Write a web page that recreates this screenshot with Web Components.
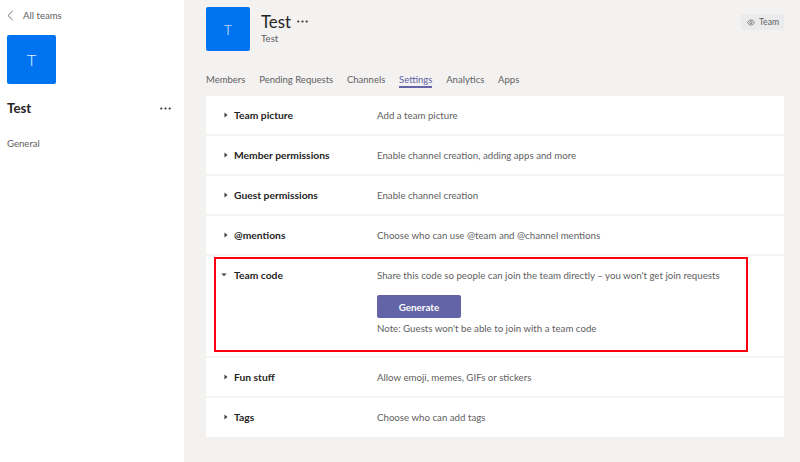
<!DOCTYPE html>
<html><head><meta charset="utf-8"><title>Team settings</title>
<style>
html,body{margin:0;padding:0;height:100%;overflow:hidden}
body{font-family:Lato,"Open Sans","Liberation Sans",sans-serif;color:#252423;background:#f3f2f1}
</style></head><body>
<team-page>
<team-sidebar slot="side" name="Test"></team-sidebar>
<team-main slot="main">
<team-header name="Test" desc="Test"></team-header>
<team-tabs></team-tabs>
<settings-card>
<setting-row label="Team picture" desc="Add a team picture"></setting-row>
<setting-row label="Member permissions" desc="Enable channel creation, adding apps and more"></setting-row>
<setting-row label="Guest permissions" desc="Enable channel creation"></setting-row>
<setting-row label="@mentions" desc="Choose who can use @team and @channel mentions"></setting-row>
<setting-row label="Team code" desc="Share this code so people can join the team directly – you won't get join requests" open>
<team-code></team-code>
</setting-row>
<setting-row label="Fun stuff" desc="Allow emoji, memes, GIFs or stickers"></setting-row>
<setting-row label="Tags" desc="Choose who can add tags" last></setting-row>
</settings-card>
</team-main>
</team-page>
<script>
const def=(n,html)=>customElements.define(n,class extends HTMLElement{
 connectedCallback(){ if(this.shadowRoot) return; this.attachShadow({mode:'open'}).innerHTML=typeof html==='function'?html(this):html; }
});
const dots=(w,c)=>`<svg width="${w}" height="3" viewBox="0 0 11 3" fill="${c}"><circle cx="1.3" cy="1.5" r="1.1"/><circle cx="5.5" cy="1.5" r="1.1"/><circle cx="9.7" cy="1.5" r="1.1"/></svg>`;
def('team-page',`<style>:host{display:flex;width:800px;height:462px}
::slotted([slot=side]){flex:0 0 184px}::slotted([slot=main]){flex:1}</style>
<slot name="side"></slot><slot name="main"></slot>`);
def('team-sidebar',e=>`<style>
:host{display:block;background:#fff;padding:9px 0 0 7px;box-sizing:border-box;height:462px}
.back{display:flex;align-items:center;font-size:9.6px;line-height:14px;color:#616161;height:14px}
.back svg{margin-right:9px;margin-top:-1px}
.av{width:49px;height:49px;background:#0074f0;border-radius:2px;color:#e3f0ff;font-size:16.5px;font-weight:300;display:flex;align-items:center;justify-content:center;margin-top:12px}
.name{display:flex;justify-content:space-between;align-items:center;margin-top:15px;padding-right:13px;height:18px;font-weight:700;font-size:13.3px;color:#252423}
.gen{font-size:9.6px;line-height:14px;color:#616161;margin-top:20px}
</style>
<div class="back"><svg width="7" height="11" viewBox="0 0 7 11" fill="none" stroke="#757575" stroke-width="1"><path d="M5.8.8 1 5.5l4.8 4.7"/></svg><span>All teams</span></div>
<div class="av">T</div>
<div class="name"><span>${e.getAttribute('name')}</span>${dots(11,'#333')}</div>
<div class="gen">General</div>`);
def('team-main',`<style>:host{display:block;padding:7px 16px 0 22px;box-sizing:border-box;height:462px;background:#f3f2f1}</style><slot></slot>`);
def('team-header',e=>`<style>
:host{display:flex;height:44px;position:relative}
.av{width:44px;height:44px;background:#0074f0;border-radius:2px;color:#e3f0ff;font-size:14.5px;font-weight:300;display:flex;align-items:center;justify-content:center}
.t{margin-left:11px}
.n{display:flex;align-items:center;font-size:16.8px;line-height:18px;margin-top:6px;color:#252423}
.n svg{margin-left:6px;margin-top:-1px}
.d{font-size:9.7px;line-height:14px;color:#616161}
.badge{margin-left:auto;align-self:flex-start;margin-top:7px;display:flex;align-items:center;gap:4px;height:16px;padding:0 5px 0 6px;background:#ebebeb;border-radius:2px;font-size:8.6px;color:#616161}
</style>
<div class="av">T</div>
<div class="t"><div class="n"><span>${e.getAttribute('name')}</span>${dots(11,'#333')}</div><div class="d">${e.getAttribute('desc')}</div></div>
<div class="badge"><svg width="8" height="7" viewBox="0 0 9 7" fill="none" stroke="#616161" stroke-width=".8"><path d="M.5 3.5C1.6 1.6 3 .6 4.5.6S7.4 1.6 8.5 3.5C7.4 5.4 6 6.4 4.5 6.4S1.6 5.4.5 3.5Z"/><circle cx="4.5" cy="3.5" r="1.4"/></svg><span>Team</span></div>`);
def('team-tabs',()=>`<style>
:host{display:flex;gap:13.8px;margin-top:21px;height:24px;font-size:9.5px;color:#616161}
div{height:14px;line-height:16px}
.on{color:#6264a7;border-bottom:2px solid #6264a7}
</style><div>Members</div><div>Pending Requests</div><div>Channels</div><div class="on">Settings</div><div>Analytics</div><div>Apps</div>`);
def('settings-card',`<style>:host{display:block;background:#fff;width:578px}</style><slot></slot>`);
def('setting-row',e=>{const o=e.hasAttribute('open'),last=e.hasAttribute('last');return `<style>
:host{display:flex;box-sizing:border-box;min-height:${last?39:40}px;padding:12px 0 0 17px;border-bottom:${last?'0':'2px solid #f4f4f3'}}
.a{width:7px;height:14px;display:flex;align-items:center;margin-left:${o?-2:0}px;margin-right:${o?2:0}px}
.l{width:143px;margin-left:4px;font-size:10.3px;line-height:14px;font-weight:700;color:#252423}
.d{font-size:9.7px;line-height:14px;color:#616161}
:host([open]){padding-bottom:21px}
</style>
<div class="a"><svg width="6" height="6" viewBox="0 0 5 5" fill="#444">${o?'<path d="M.3 1.2h4.4L2.5 3.6z"/>':'<path d="M1.2.4v4.2L3.8 2.5z"/>'}</svg></div>
<div class="l">${e.getAttribute('label')}</div>
<div><div class="d">${e.getAttribute('desc')}</div><slot></slot></div>`});
def('team-code',`<style>
:host{display:block}
button{display:block;width:84px;height:23px;margin-top:13px;padding:0;border:0;border-radius:2px;background:#6264a7;color:#fff;font:700 9.8px Lato,sans-serif}
p{margin:3px 0 0;font-size:9.7px;line-height:14px;color:#616161}
.red{position:absolute;left:214px;top:257px;width:530px;height:91px;border:2px solid #fa0010}
</style><button>Generate</button><p>Note: Guests won't be able to join with a team code</p><div class="red"></div>`);
</script>
</body></html>
